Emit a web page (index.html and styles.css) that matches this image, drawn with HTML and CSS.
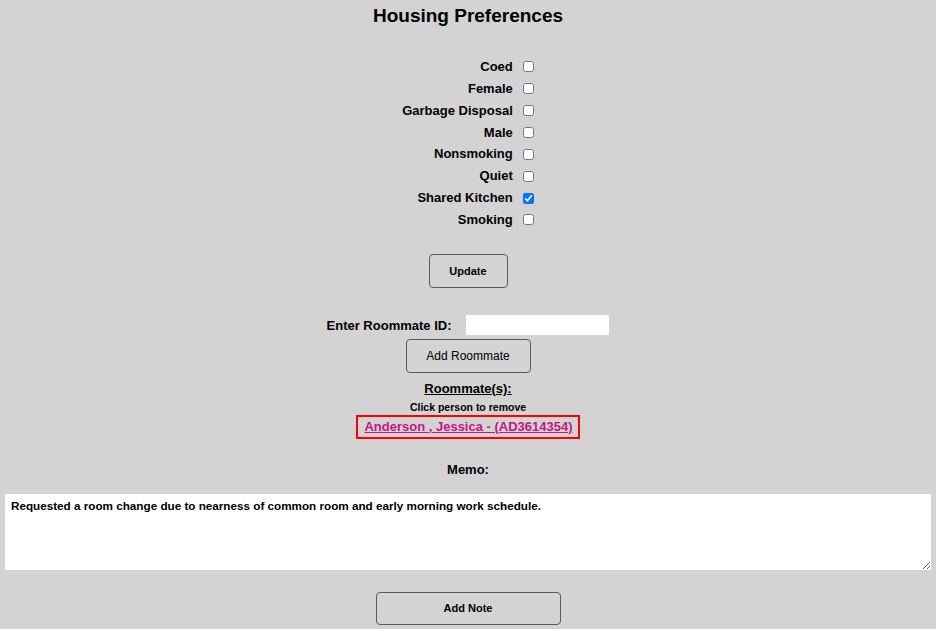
FILE: index.html
```html
<!DOCTYPE html>
<html lang="en">
<head>
<meta charset="utf-8">
<title>Housing Preferences</title>
<link rel="stylesheet" href="styles.css">
</head>
<body>
<div class="page">
  <h1 class="title">Housing Preferences</h1>
  <div class="prefs">
    <label class="pref-label" for="p1">Coed</label><input class="pref-box" id="p1" type="checkbox">
    <label class="pref-label" for="p2">Female</label><input class="pref-box" id="p2" type="checkbox">
    <label class="pref-label" for="p3">Garbage Disposal</label><input class="pref-box" id="p3" type="checkbox">
    <label class="pref-label" for="p4">Male</label><input class="pref-box" id="p4" type="checkbox">
    <label class="pref-label" for="p5">Nonsmoking</label><input class="pref-box" id="p5" type="checkbox">
    <label class="pref-label" for="p6">Quiet</label><input class="pref-box" id="p6" type="checkbox">
    <label class="pref-label" for="p7">Shared Kitchen</label><input class="pref-box" id="p7" type="checkbox" checked>
    <label class="pref-label" for="p8">Smoking</label><input class="pref-box" id="p8" type="checkbox">
  </div>
  <button class="btn btn-update" type="button">Update</button>
  <div class="rm-row">
    <label class="rm-label" for="rmid">Enter Roommate ID:</label>
    <input class="rm-input" id="rmid" type="text">
  </div>
  <button class="btn btn-add" type="button">Add Roommate</button>
  <div class="rm-heading">Roommate(s):</div>
  <div class="rm-hint">Click person to remove</div>
  <div class="rm-box"><a class="rm-link" href="#">Anderson , Jessica - (AD3614354)</a></div>
  <div class="memo-label">Memo:</div>
  <textarea class="memo">Requested a room change due to nearness of common room and early morning work schedule.</textarea>
  <button class="btn btn-note" type="button">Add Note</button>
</div>
</body>
</html>
```
FILE: styles.css
```css
html, body {
  margin: 0;
  padding: 0;
  background: #d3d3d3;
}
body {
  font-family: "Liberation Sans", Arial, sans-serif;
  color: #000;
}
.page {
  display: flex;
  flex-direction: column;
  align-items: center;
}
.title {
  margin: 0;
  padding-top: 4px;
  font-size: 19px;
  line-height: 24px;
  font-weight: bold;
}
.prefs {
  margin-top: 28px;
  display: grid;
  grid-template-columns: auto auto;
  grid-auto-rows: 21.86px;
  column-gap: 10px;
  align-items: center;
}
.pref-label {
  text-align: right;
  font-size: 13px;
  font-weight: bold;
  line-height: 16px;
}
.pref-box {
  margin: 0;
  width: 11px;
  height: 11px;
}
.btn {
  background: #d3d3d3;
  border: 1px solid #5a5a5a;
  border-radius: 4px;
  color: #000;
  padding: 0;
  font-family: "Liberation Sans", Arial, sans-serif;
  font-weight: bold;
  font-size: 11px;
}
.btn-update {
  margin-top: 23px;
  width: 79px;
  height: 34px;
}
.rm-row {
  margin-top: 27px;
  display: flex;
  align-items: center;
  gap: 15px;
  height: 21px;
}
.rm-label {
  font-size: 13px;
  font-weight: bold;
}
.rm-input {
  width: 143px;
  height: 20px;
  border: none;
  padding: 0 2px;
  box-sizing: border-box;
  background: #fff;
  margin: 0;
}
.btn-add {
  margin-top: 3px;
  width: 125px;
  height: 34px;
  font-weight: normal;
  font-size: 12px;
}
.rm-heading {
  margin-top: 8px;
  font-size: 13px;
  font-weight: bold;
  line-height: 16px;
  text-decoration: underline;
}
.rm-hint {
  margin-top: 4px;
  font-size: 10.5px;
  font-weight: bold;
  line-height: 12px;
}
.rm-box {
  margin-top: 2px;
  border: 2px solid #ff0000;
  height: 24px;
  box-sizing: border-box;
  padding: 0 5px 0 6px;
  display: flex;
  align-items: center;
}
.rm-link {
  color: #c71585;
  font-size: 13px;
  font-weight: bold;
  line-height: 16px;
}
.memo-label {
  margin-top: 23px;
  font-size: 13px;
  font-weight: bold;
  line-height: 16px;
}
.memo {
  margin-top: 16px;
  align-self: stretch;
  margin-left: 5px;
  margin-right: 5px;
  height: 76px;
  box-sizing: border-box;
  border: none;
  background: #fff;
  padding: 5px 6px;
  font-family: "Liberation Sans", Arial, sans-serif;
  font-weight: bold;
  font-size: 11.7px;
  color: #000;
}
.btn-note {
  margin-top: 22px;
  width: 185px;
  height: 33px;
}
```
